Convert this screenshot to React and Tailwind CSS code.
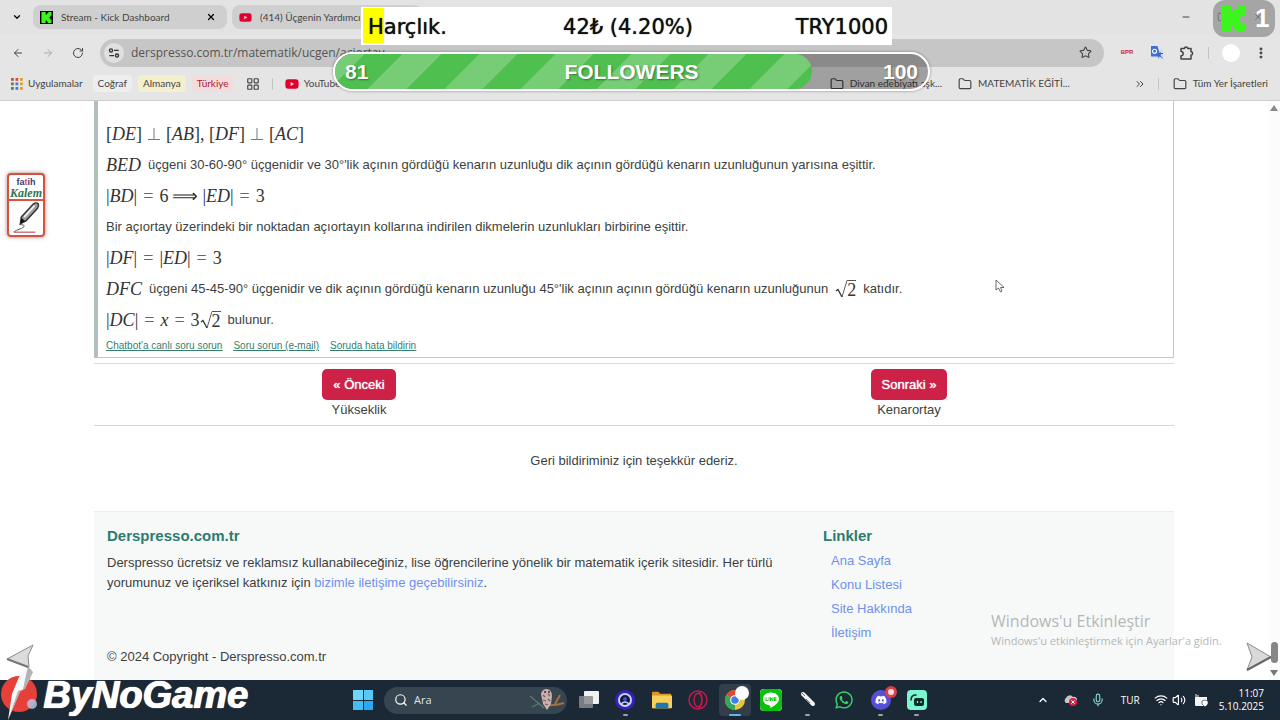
import React from 'react';
import {
  ArrowLeft, ArrowRight, RotateCw, ChevronDown, ChevronUp, X, Star, Folder,
  LayoutGrid, Minus, Square, Search, Mic, Wifi, Volume2, EllipsisVertical, ChevronsRight,
} from 'lucide-react';
import { FaYoutube, FaWhatsapp, FaDiscord, FaLine } from 'react-icons/fa6';

const KickLogo = ({ className }) => (
  <svg viewBox="0 0 24 26" className={className}>
    <path d="M0 0h10v6h3V3h3V0h8v9h-3v3h-2v3h2v3h3v8h-9v-3h-2v-3h-3v6H0z" fill="#3bf51c" />
  </svg>
);

const AppsIcon = () => {
  const colors = ['#d94a3d', '#d94a3d', '#e0a030', '#4a8a5a', '#3f7fd0', '#e0a030', '#4a8a5a', '#3f7fd0', '#e0a030'];
  return (
    <svg viewBox="0 0 12 12" className="size-3 shrink-0">
      {colors.map((color, i) => (
        <rect key={i} x={(i % 3) * 4.5} y={Math.floor(i / 3) * 4.5} width="2.8" height="2.8" fill={color} />
      ))}
    </svg>
  );
};

const TuneIcon = () => (
  <svg viewBox="0 0 14 14" className="size-3" fill="none" stroke="#333" strokeWidth="1.6">
    <circle cx="3.5" cy="4" r="1.8" />
    <path d="M7 4h5.5M1.5 10H7" />
    <circle cx="10.5" cy="10" r="1.8" />
  </svg>
);

const TranslateIcon = () => (
  <svg viewBox="0 0 14 14" className="size-3.5">
    <path d="M5 4h7.5l1 9.5H8z" fill="#cfd8ea" />
    <path d="M1 0h6.5l3 10.5H1z" fill="#3f6fd8" />
    <circle cx="4.6" cy="5.2" r="2" fill="none" stroke="#fff" strokeWidth="1.1" />
    <path d="M8 7.5h5M10.5 6.5v1c0 2-1 3-2.5 4M9 9l3.5 3" stroke="#3f5fc0" strokeWidth="1" fill="none" />
  </svg>
);

const ExtensionsIcon = () => (
  <svg viewBox="0 0 14 14" className="size-3.5" fill="none" stroke="#444" strokeWidth="1.5" strokeLinejoin="round">
    <path d="M1 2.500h3.500a1.600 1.600 0 0 1 3.200 0h3.300v3.300a1.600 1.600 0 0 1 0 3.200v4H1V9.800a2.200 2.200 0 0 0 0-4.400z" />
  </svg>
);

const Tab = ({ icon, title, closable, className }) => (
  <button className={`flex h-6 items-center gap-2 rounded-lg bg-[#cfcfcf] px-[7px] text-left text-[10px] text-[#444] ${className}`}>
    {icon}
    <span className="grow whitespace-nowrap">{title}</span>
    {closable && <X className="mr-1 size-2.5 text-black" strokeWidth={3} />}
  </button>
);

const FolderLink = ({ children }) => (
  <a href="#" className="flex items-center gap-1.5 whitespace-nowrap">
    <Folder className="size-3.5" strokeWidth={2} />
    {children}
  </a>
);

const BrowserHeader = () => (
  <header className="shrink-0 border-b border-[#cdcdcd] bg-[#e5e5e5] font-[Lato,'Noto_Sans',sans-serif] text-[#444]">
    <div className="flex h-[34px] items-center bg-[#e3e3e3] pl-3">
      <button aria-label="Sekme ara"><ChevronDown className="size-2.5 text-black" strokeWidth={3} /></button>
      <Tab icon={<KickLogo className="size-[13px] bg-black p-px" />} title="Stream - Kick Dashboard" closable className="ml-[11px] w-[194px]" />
      <Tab icon={<FaYoutube className="size-[13px] text-[#e0002d]" />} title="(414) Üçgenin Yardımcı" className="ml-[5px] w-[190px]" />
      <div className="ml-auto flex items-center gap-[26px] pr-[17px] text-[#222]">
        <button aria-label="Küçült"><Minus className="size-2.5" /></button>
        <button aria-label="Ekranı kapla"><Square className="size-2.5" /></button>
        <button aria-label="Kapat"><X className="size-2.5" /></button>
      </div>
    </div>

    <div className="flex h-[37px] items-center pl-3 pr-3">
      <div className="flex gap-[18px]">
        <button aria-label="Geri"><ArrowLeft className="size-3" /></button>
        <button aria-label="İleri"><ArrowRight className="size-3 text-[#aaa]" /></button>
        <button aria-label="Yenile"><RotateCw className="size-3" /></button>
      </div>
      <div className="ml-4 flex h-7 grow items-center rounded-full bg-[#c6c6c6] pl-1 pr-3">
        <span className="flex size-5 items-center justify-center rounded-full bg-[#e0e0e0]"><TuneIcon /></span>
        <input
          aria-label="Adres"
          defaultValue="derspresso.com.tr/matematik/ucgen/aciortay"
          className="ml-[7px] grow bg-transparent font-['Open_Sans',sans-serif] text-xs text-[#555] outline-none"
        />
        <Star className="size-[13px]" />
      </div>
      <div className="ml-4 flex items-center gap-4">
        <span className="w-3.5 text-center font-['Liberation_Sans',sans-serif] text-[6px] font-bold text-[#d81f2a]">BPR</span>
        <TranslateIcon />
        <ExtensionsIcon />
      </div>
      <span className="ml-3.5 h-3 w-px bg-[#c4c4c4]" />
      <span className="ml-[13px] size-[18px] rounded-full bg-white" />
      <button aria-label="Menü" className="ml-3.5"><EllipsisVertical className="size-3.5" strokeWidth={3} /></button>
    </div>

    <nav className="flex h-[29px] items-center pb-1 pl-[11px] pr-3 text-[10px]">
      <a href="#" className="flex items-center gap-[5px]"><AppsIcon />Uygulamalar</a>
      <a href="#" className="ml-2.5 rounded bg-[#eee] px-[5px] py-px">Coğraf</a>
      <a href="#" className="ml-1.5 rounded bg-[#f3efcf] px-[5px] py-px">Almanya</a>
      <a href="#" className="ml-1.5 rounded bg-[#f3dcdc] px-[5px] py-px text-[#b3202f]">Türkiye</a>
      <LayoutGrid className="ml-3 size-3.5" />
      <span className="ml-3 h-3 w-px bg-[#c4c4c4]" />
      <a href="#" className="ml-3 flex items-center gap-[5px]"><FaYoutube className="size-3.5 text-[#e0002d]" />YouTube</a>
      <div className="ml-auto flex items-center gap-4">
        <FolderLink>Divan edebiyatı aşk...</FolderLink>
        <FolderLink>MATEMATİK EĞİTİ...</FolderLink>
      </div>
      <ChevronsRight className="ml-16 size-3" />
      <span className="ml-3 mr-3.5 h-3 w-px bg-[#c4c4c4]" />
      <FolderLink>Tüm Yer İşaretleri</FolderLink>
    </nav>
  </header>
);

const MathText = ({ children }) => (
  <span className="inline-flex items-center whitespace-nowrap font-['Liberation_Serif',serif] text-[18px] leading-5 text-[#333]">
    {children}
  </span>
);

const Op = ({ children }) => <span className="mx-1.5 text-[#666]">{children}</span>;

const Perp = () => (
  <svg viewBox="0 0 12 12" className="mx-1.5 size-3" fill="none" stroke="#777">
    <path d="M6 0v11.500M0 11.500h12" />
  </svg>
);

const Sqrt = ({ children }) => (
  <span className="inline-flex items-stretch">
    <svg viewBox="0 0 12 18" className="h-[18px] w-3" fill="none" stroke="#333">
      <path d="M1 11l2-1.5L7 17" strokeWidth="1.3" />
      <path d="M7 17l5-16.5" strokeWidth="0.8" />
    </svg>
    <span className="border-t border-[#555] leading-[18px]">{children}</span>
  </span>
);

const Solution = () => (
  <section className="border-b border-l-4 border-r border-[#c3c6c6] border-l-[#b1bfbd] px-2 pb-[3px] pt-[23px]">
    <div className="flex flex-col gap-[11px] leading-5">
      <p className="h-5"><MathText>[<i>DE</i>]<Perp />[<i>AB</i>],&nbsp;[<i>DF</i>]<Perp />[<i>AC</i>]</MathText></p>
      <p className="flex h-5 items-center gap-[7px]">
        <MathText><i>BED</i></MathText>
        üçgeni 30-60-90° üçgenidir ve 30°'lik açının gördüğü kenarın uzunluğu dik açının gördüğü kenarın uzunluğunun yarısına eşittir.
      </p>
      <p className="h-5"><MathText>|<i>BD</i>|<Op>=</Op>6<span className="mx-1">⟹</span>|<i>ED</i>|<Op>=</Op>3</MathText></p>
      <p className="h-5">Bir açıortay üzerindeki bir noktadan açıortayın kollarına indirilen dikmelerin uzunlukları birbirine eşittir.</p>
      <p className="h-5"><MathText>|<i>DF</i>|<Op>=</Op>|<i>ED</i>|<Op>=</Op>3</MathText></p>
      <p className="flex h-5 items-center gap-[7px]">
        <MathText><i>DFC</i></MathText>
        üçgeni 45-45-90° üçgenidir ve dik açının gördüğü kenarın uzunluğu 45°'lik açının açının gördüğü kenarın uzunluğunun
        <MathText><Sqrt>2</Sqrt></MathText>
        katıdır.
      </p>
      <p className="flex h-5 items-center gap-[7px]">
        <MathText>|<i>DC</i>|<Op>=</Op><i>x</i><Op>=</Op>3<Sqrt>2</Sqrt></MathText>
        bulunur.
      </p>
    </div>
    <div className="mt-2 flex gap-[11px] text-[10px] leading-4 text-[#35806d] underline">
      <a href="#">Chatbot'a canlı soru sorun</a>
      <a href="#">Soru sorun (e-mail)</a>
      <a href="#">Soruda hata bildirin</a>
    </div>
  </section>
);

const PageButton = ({ label, caption }) => (
  <div className="flex flex-col items-center">
    <button className="h-[31px] rounded-[5px] bg-[#cd2147] px-[11px] text-white [text-shadow:0_0_1px_#fff]">{label}</button>
    <span className="leading-5">{caption}</span>
  </div>
);

const footerLinks = ['Ana Sayfa', 'Konu Listesi', 'Site Hakkında', 'İletişim'];

const Footer = () => (
  <footer className="grid grow grid-cols-[2fr_1fr] content-start border-t border-[#eceeee] bg-[#f7f9f9] pt-3.5">
    <div className="flex flex-col pl-[13px] pr-3">
      <h2 className="text-[15px] font-bold leading-5 text-[#2c7c6d]">Derspresso.com.tr</h2>
      <p className="mt-[7px] leading-5">
        Derspresso ücretsiz ve reklamsız kullanabileceğiniz, lise öğrencilerine yönelik bir matematik içerik sitesidir. Her türlü
        yorumunuz ve içeriksel katkınız için <a href="#" className="text-[#6f90ea]">bizimle iletişime geçebilirsiniz</a>.
      </p>
      <p className="mt-[54px] leading-5">© 2024 Copyright - Derspresso.com.tr</p>
    </div>
    <div className="pl-[9px]">
      <h2 className="text-[15px] font-bold leading-5 text-[#2c7c6d]">Linkler</h2>
      <ul className="mt-[3px] pl-2 leading-6 text-[#6f90ea]">
        {footerLinks.map((link) => <li key={link}><a href="#">{link}</a></li>)}
      </ul>
    </div>
  </footer>
);

const Scrollbar = () => (
  <div className="flex w-3 shrink-0 flex-col items-center justify-between bg-[#fcfcfc] py-1">
    <svg viewBox="0 0 8 6" className="h-1.5 w-2"><path d="M4 0l4 6H0z" fill="#888" /></svg>
    <div className="flex flex-col items-center gap-[7px]">
      <span className="h-[21px] w-[7px] rounded-full bg-[#868686]" />
      <svg viewBox="0 0 8 6" className="h-1.5 w-2"><path d="M4 6L0 0h8z" fill="#777" /></svg>
    </div>
  </div>
);

const ChromeIcon = () => (
  <svg viewBox="0 0 24 24" className="size-5">
    <circle cx="12" cy="12" r="12" fill="#e8c63a" />
    <path d="M12 12L1.6 6A12 12 0 0 1 22.4 6z" fill="#dc4a3c" />
    <path d="M12 12L1.6 6A12 12 0 0 0 12 24z" fill="#3aa757" />
    <circle cx="12" cy="12" r="5.8" fill="#fff" />
    <circle cx="12" cy="12" r="4.5" fill="#3f7fe8" />
  </svg>
);

const SearchPicture = () => (
  <svg viewBox="0 0 38 24" className="h-6 w-[38px] shrink-0">
    <path d="M2 8l14 12M4 19l8-4" stroke="#5c7a70" strokeWidth="1.3" fill="none" />
    <path d="M17 17q10 1 19-2M27 16l5-9" stroke="#a8703c" strokeWidth="2" fill="none" />
    <path d="M13 6q1-5 6-5 5 1 5 7l-1 8-4 6-4-6z" fill="#c9b0ac" />
    <path d="M15 7l2 2M20 6l2 2M15 12l3 1M20 11l2 2M17 16l3 1" stroke="#7d5d60" strokeWidth="1.3" />
    <circle cx="17" cy="4" r="1" fill="#3a2a2a" />
    <circle cx="21" cy="4" r="1" fill="#3a2a2a" />
  </svg>
);

const apps = [
  {
    name: 'Görev Görünümü',
    icon: (
      <svg viewBox="0 0 20 20" className="size-5">
        <rect x="5" y="1" width="15" height="13" rx="1" fill="#f1f1f1" />
        <rect x="0" y="6" width="14" height="12" rx="1" fill="#888b8d" fillOpacity=".85" />
      </svg>
    ),
  },
  {
    name: 'Ses',
    mark: 'bg-[#9aa3aa]',
    icon: (
      <svg viewBox="0 0 20 20" className="size-5">
        <circle cx="10" cy="10" r="10" fill="#3a1fb8" />
        <circle cx="10" cy="10" r="6" fill="#151540" stroke="#c4d4ff" strokeWidth="2" />
        <circle cx="10" cy="9" r="2" fill="#3a57c0" />
        <path d="M6 14q4-4 8 0" stroke="#c4d4ff" strokeWidth="1.5" fill="none" />
      </svg>
    ),
  },
  {
    name: 'Dosya Gezgini',
    icon: (
      <svg viewBox="0 0 22 20" className="size-5">
        <path d="M0 2q0-1 1-1h6l2 2h12v15q0 1-1 1H1q-1 0-1-1z" fill="#d9962a" />
        <path d="M0 5h22v13q0 1-1 1H1q-1 0-1-1z" fill="#f8d05a" />
        <path d="M4 19v-4q0-2 2-2h10q2 0 2 2v4z" fill="#1e78b8" />
      </svg>
    ),
  },
  {
    name: 'Opera',
    icon: (
      <svg viewBox="0 0 20 20" className="size-5" fill="none" stroke="#c2184a" strokeWidth="1.5">
        <circle cx="10" cy="10" r="9" />
        <ellipse cx="10" cy="10" rx="4" ry="6.8" />
        <path d="M11 1.5q6 8.500 0 17" />
      </svg>
    ),
  },
  { name: 'Chrome', icon: <ChromeIcon />, mark: 'bg-[#62b5e5]', active: true },
  {
    name: 'LINE',
    icon: <FaLine className="size-[22px] shrink-0 rounded bg-white text-[#0bc20b]" />,
  },
  {
    name: 'Kalem',
    mark: 'bg-[#9aa3aa]',
    icon: (
      <svg viewBox="0 0 20 20" className="size-5">
        <path d="M5 4l10 10" stroke="#f2f2f2" strokeWidth="4" strokeLinecap="round" />
        <path d="M3 2l4 4M8 9l4 4" stroke="#6d7377" strokeWidth="1" />
      </svg>
    ),
  },
  { name: 'WhatsApp', icon: <FaWhatsapp className="size-5 text-[#35d366]" /> },
  {
    name: 'Discord',
    mark: 'bg-[#9aa3aa]',
    icon: <span className="flex size-5 items-center justify-center rounded-full bg-[#5650d8]"><FaDiscord className="size-3 text-white" /></span>,
  },
  {
    name: 'Streamlabs',
    mark: 'bg-[#9aa3aa]',
    icon: (
      <svg viewBox="0 0 20 20" className="size-5">
        <rect width="20" height="20" rx="4" fill="#7df5d0" />
        <rect x="7" y="8" width="10" height="8" rx="2" fill="#0b2b2b" />
        <path d="M4 10q0-5 5-5" stroke="#0b2b2b" strokeWidth="1.5" fill="none" strokeLinecap="round" />
        <path d="M10.500 11v2M14 11v2" stroke="#7df5d0" strokeWidth="1.3" />
      </svg>
    ),
  },
];

const AppButton = ({ app }) => (
  <button aria-label={app.name} className="relative flex size-5 items-center justify-center">
    {app.active && <span className="absolute -inset-x-1.5 -inset-y-1.5 rounded bg-white/10" />}
    <span className="relative">{app.icon}</span>
    {app.active && <span className="absolute -right-1 -top-1 size-3.5 rounded-full bg-white" />}
    {app.name === 'Discord' && (
      <span className="absolute -right-1.5 -top-1 flex size-3 items-center justify-center rounded-full bg-[#d8404a]">
        <span className="size-1.5 rounded-full bg-[#f7dada]" />
      </span>
    )}
    {app.mark && <span className={`absolute -bottom-1.5 h-0.5 rounded-full ${app.active ? 'w-3' : 'w-[5px]'} ${app.mark}`} />}
  </button>
);

const Taskbar = () => (
  <div className="grid h-10 shrink-0 grid-cols-[1fr_auto_1fr] items-center bg-[#1b2936] font-['Open_Sans','Noto_Sans',sans-serif] text-white">
    <span />
    <div className="flex items-center">
      <button aria-label="Başlat" className="grid size-5 grid-cols-2 gap-px">
        <span className="bg-[#6ed5fb]" />
        <span className="bg-[#58c8f8]" />
        <span className="bg-[#43bdf5]" />
        <span className="bg-[#2aa9ef]" />
      </button>
      <label className="ml-[11px] flex h-[27px] w-[183px] items-center rounded-full bg-[#36454f] pl-2.5 pr-px">
        <Search className="size-3.5 shrink-0" />
        <input placeholder="Ara" aria-label="Ara" className="ml-1.5 w-0 grow bg-transparent text-[11px] outline-none placeholder:text-[#dfe3e6]" />
        <SearchPicture />
      </label>
      <div className="ml-3 flex w-[348px] justify-between">
        {apps.map((app) => <AppButton key={app.name} app={app} />)}
      </div>
    </div>
    <div className="flex items-center justify-end pr-4">
      <ChevronUp className="size-3" strokeWidth={2.5} />
      <svg viewBox="0 0 14 12" className="ml-3.5 h-3 w-3.5">
        <path d="M3 9a3 3 0 0 1 0-5 4 4 0 0 1 7-1 3 3 0 0 1 2 6z" fill="#c4c8cb" />
        <circle cx="10" cy="8" r="4" fill="#d62246" />
        <path d="M8.500 6.500l3 3M11.500 6.500l-3 3" stroke="#fff" />
      </svg>
      <Mic className="ml-3.5 size-3.5 text-[#7fd8d0]" />
      <span className="ml-4 text-[10px]">TUR</span>
      <Wifi className="ml-3.5 size-3.5" />
      <Volume2 className="ml-1 size-3.5" />
      <svg viewBox="0 0 15 13" className="ml-2 h-[13px] w-[15px]">
        <path d="M2 3h11v8q0 1-1 1H2q-1 0-1-1V4q0-1 1-1z" fill="#f4f4f4" />
        <path d="M2 0v4M4 1v3" stroke="#f4f4f4" />
        <path d="M11 6l3 1v3l-3 3-3-3V7z" fill="#fff" stroke="#1b2936" strokeWidth=".6" />
      </svg>
      <div className="ml-2.5 text-right text-[10px] leading-[13px]">
        <p>11:07</p>
        <p>5.10.2025</p>
      </div>
    </div>
  </div>
);

const TipBar = () => (
  <div className="absolute left-[361px] top-[7px] grid h-[38px] w-[531px] grid-cols-[1fr_auto_1fr] items-center bg-white pl-[7px] pr-1 pt-1 font-['DejaVu_Sans',sans-serif] text-[21px] text-[#111] [text-shadow:0_0_1px_#111]">
    <span className="absolute left-0.5 top-px h-[35px] w-[21px] bg-[#ffff00]" />
    <span className="relative">Harçlık.</span>
    <span>42₺ (4.20%)</span>
    <span className="text-right">TRY1000</span>
  </div>
);

const FollowerGoal = ({ current, goal }) => (
  <div className="absolute left-[333px] top-[52px] h-[39px] w-[597px] overflow-hidden rounded-full border-2 border-white bg-black/30 shadow-[0_0_3px_rgba(0,0,0,0.4)]">
    <div
      style={{ width: `${(current / goal) * 100 - 0.5}%` }}
      className="h-full rounded-r-full bg-[repeating-linear-gradient(135deg,#76cd76_0_21px,#4fc04f_21px_48px,#76cd76_48px_54px)]"
    />
    <div className="absolute inset-0 grid grid-cols-[1fr_auto_1fr] items-center px-2.5 text-[21px] font-bold text-white [text-shadow:1px_1px_2px_rgba(0,0,0,0.4)]">
      <span>{current}</span>
      <span>FOLLOWERS</span>
      <span className="text-right">{goal}</span>
    </div>
  </div>
);

const KickCounter = () => (
  <div className="absolute right-[5px] top-0 flex h-[37px] w-[62px] items-center gap-2.5 rounded-xl bg-[#8a8a8a]/70 pl-2">
    <KickLogo className="h-[26px] w-6 shrink-0" />
    <span className="text-[26px] font-bold text-white">1</span>
  </div>
);

const FatihKalem = () => (
  <button className="absolute left-[7px] top-[173px] flex h-16 w-[38px] flex-col items-center rounded border-2 border-[#d5523f] bg-white shadow-[0_0_4px_rgba(120,60,50,0.6)]">
    <span className="mt-0.5 text-[9px] font-bold leading-[10px] text-[#33407f]">fa<span className="text-[#d5523f]">t</span>ih</span>
    <span className="font-['Liberation_Serif',serif] text-xs font-bold italic leading-3 text-[#2f7258]">Kalem</span>
    <svg viewBox="0 0 34 36" className="w-full grow border-t-2 border-[#e0533a]">
      <path d="M12 17L25 3q3-2 5 0 1 2-1 5L17 21l-6 3z" fill="#9aa0a0" stroke="#333" strokeWidth="1.5" />
      <path d="M15 17L26 5" stroke="#eee" strokeWidth="2" />
      <path d="M11 24l1-6 4 3z" fill="#111" />
      <path d="M10 25q6 0 5 2t-8 4q-4 2-2 2" stroke="#555" fill="none" />
      <path d="M4 33h23" stroke="#b65060" strokeWidth="1.2" />
    </svg>
  </button>
);

const ByNoGame = () => (
  <div className="absolute bottom-0 left-0 h-[76px] w-[260px]">
    <svg viewBox="0 0 40 76" className="absolute bottom-0 left-0 h-[76px] w-10">
      <circle cx="19" cy="50" r="18" fill="#e5403a" />
      <circle cx="32" cy="60" r="5" fill="#b9c8e8" fillOpacity=".8" />
      <path d="M19 33l9-9 5 5-10 17-3 1L8 76l4-26z" fill="#f8f8f8" />
      <path d="M28 22l5 6-8 17-4 1L8 76l10-29 5-2z" fill="#b4b4b4" />
      <path d="M7 15L33 1l-5 11 1 11z" fill="#dcdcdc" stroke="#8b8b8b" />
      <path d="M7 15l21 8" stroke="#777" strokeWidth="2" />
    </svg>
    <span className="absolute bottom-0.5 left-[43px] text-[38px] font-bold italic leading-[46px] text-white [text-shadow:0_0_1px_#fff,1px_0_0_#fff]">ByNoGame</span>
  </div>
);

const Watermark = () => (
  <div className="absolute bottom-[69px] right-[53px] w-[236px] whitespace-nowrap font-['Open_Sans','Noto_Sans',sans-serif] text-[#b4b7b7]">
    <p className="text-base leading-5">Windows'u Etkinleştir</p>
    <p className="text-[11px] leading-5">Windows'u etkinleştirmek için Ayarlar'a gidin.</p>
  </div>
);

const App = () => (
  <div className="relative flex h-screen flex-col overflow-hidden bg-white font-['Liberation_Sans',Arial,sans-serif] text-[13px] text-[#3d3f40]">
    <BrowserHeader />
    <div className="flex min-h-0 grow">
      <main className="flex grow flex-col overflow-hidden">
        <div className="mx-auto flex w-full max-w-[1080px] grow flex-col">
          <Solution />
          <div className="mt-[5px] grid grid-cols-2 gap-5 border-y border-[#d3dad9] pb-[5px] pt-[5px]">
            <PageButton label="« Önceki" caption="Yükseklik" />
            <PageButton label="Sonraki »" caption="Kenarortay" />
          </div>
          <p className="pb-10 pt-[25px] text-center leading-5">Geri bildiriminiz için teşekkür ederiz.</p>
          <Footer />
        </div>
      </main>
      <Scrollbar />
    </div>
    <Taskbar />

    <TipBar />
    <FollowerGoal current={81} goal={100} />
    <KickCounter />
    <FatihKalem />
    <Watermark />
    <ByNoGame />
    <svg viewBox="0 0 26 30" className="absolute bottom-12 right-2 h-[30px] w-[26px]">
      <path d="M1 1l24 14L1 28l5-13z" fill="#d9d9d9" stroke="#8b8b8b" />
      <path d="M1 28l24-13" stroke="#666" strokeWidth="2" />
    </svg>
    <svg viewBox="0 0 10 14" className="absolute left-[995px] top-[279px] h-3.5 w-2.5">
      <path d="M1 1v10l2.500-2 2 4 1.500-1-1.500-3.500H9z" fill="#fff" stroke="#444" strokeWidth=".8" />
    </svg>
  </div>
);

export default App;
